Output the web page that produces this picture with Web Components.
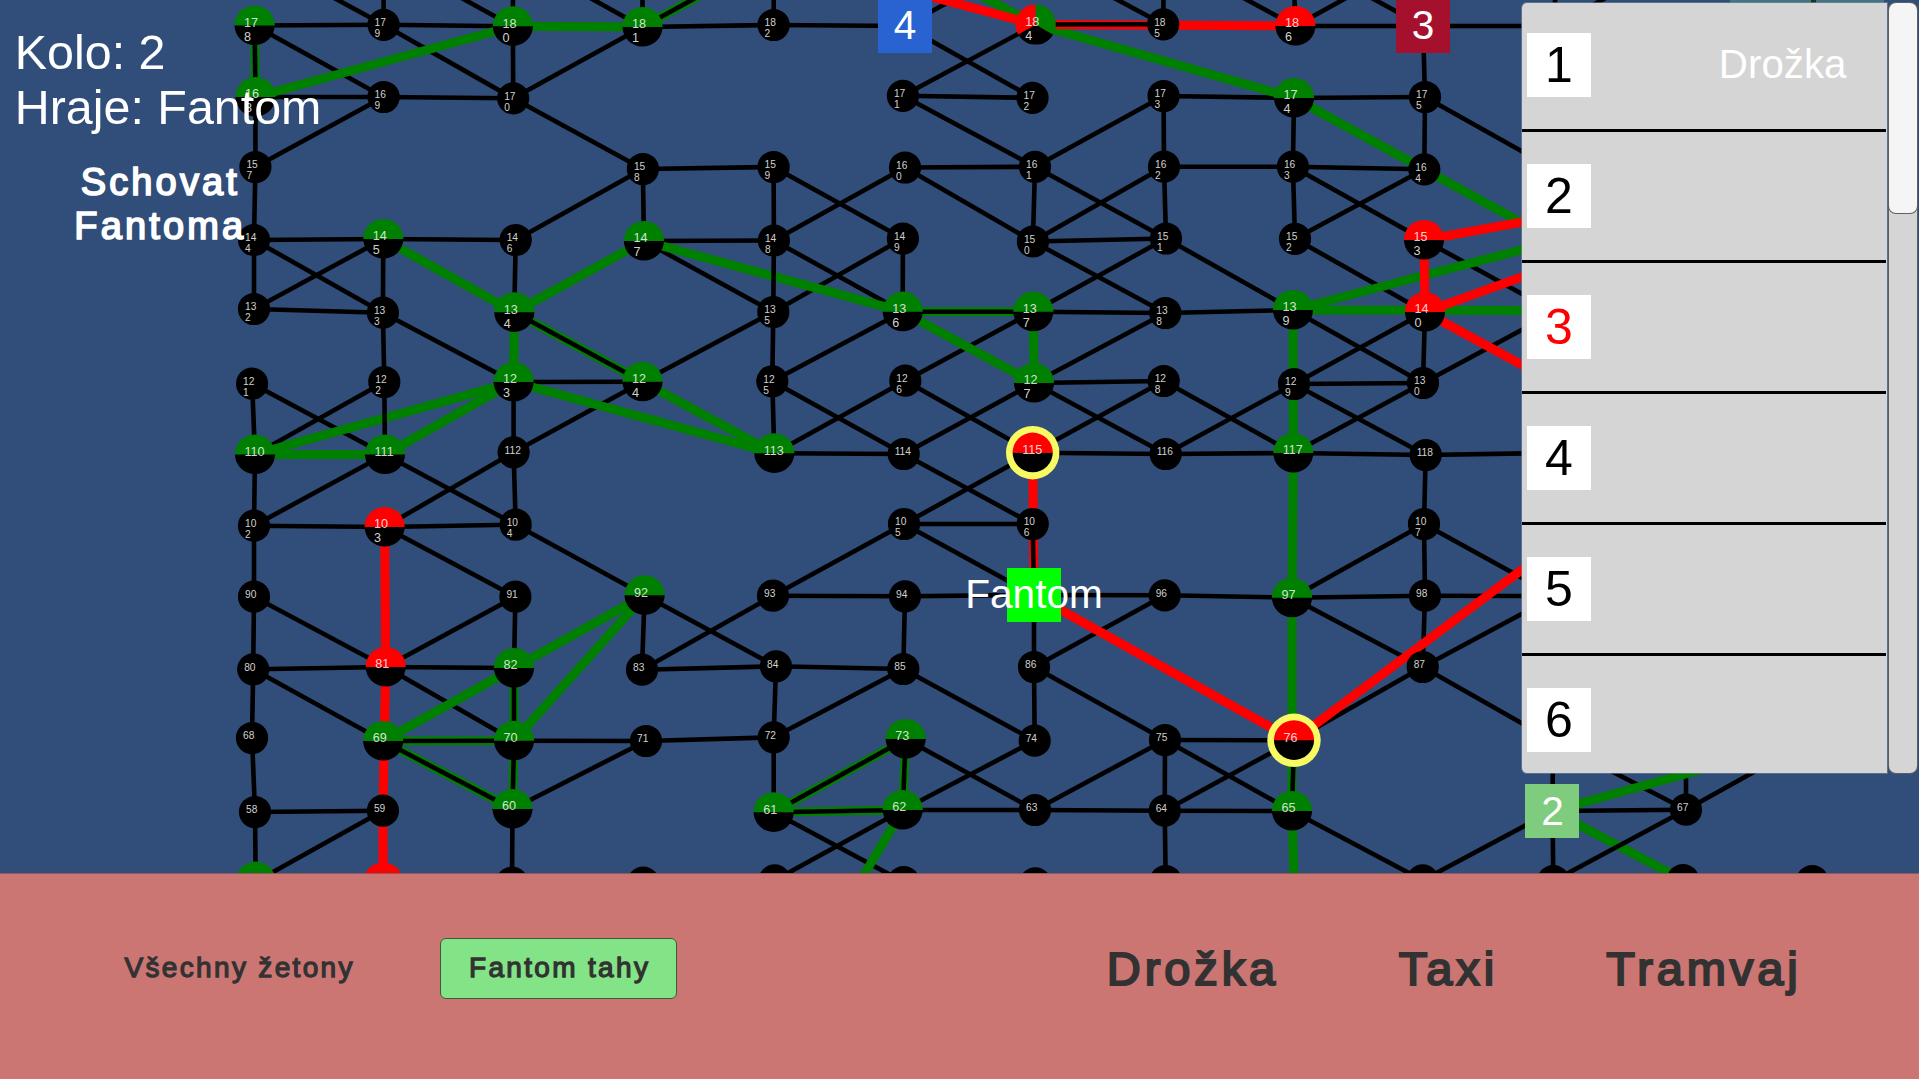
<!DOCTYPE html>
<html lang="cs">
<head>
<meta charset="utf-8">
<title>Fantom</title>
<style>
html,body{margin:0;padding:0;height:100%;overflow:hidden;background:#314d79;font-family:"Liberation Sans",Arial,sans-serif}
</style>
</head>
<body>
<game-screen></game-screen>
<script>
// id: [x, y, colours of the transport types, ring]
const NODES = {
178:[254.6,25.5,'g'],179:[383.6,24.8],180:[512.9,26.3,'g'],181:[642.5,27,'g'],182:[773.6,25],184:[1035.7,24.5,'gr'],185:[1163.2,24.3],186:[1295.4,26,'r'],
168:[255.5,97,'g'],169:[383.6,97],170:[513.2,98.3],171:[902.9,95.8],172:[1032.5,97.8],173:[1163.6,96],174:[1294,98,'g'],175:[1425,97],
157:[255.4,167],158:[642.9,169],159:[773.6,167],160:[905,167.5],161:[1035,166.8],162:[1164,166.7],163:[1292.9,166.7],164:[1424.3,169.3],
144:[254,240],145:[383.3,239,'g'],146:[515.7,240],147:[643.9,241,'g'],148:[773.9,240.5],149:[902.9,238.5],150:[1032.9,241.5],151:[1166,238.5],152:[1295,238.8],153:[1424,240,'r'],
132:[254,309],133:[382.9,312.7],134:[514.3,312.3,'g'],135:[773.3,312],136:[902.7,311.7,'g'],137:[1033.3,311.7,'g'],138:[1165.3,313],139:[1293,310,'g'],140:[1425,312,'r'],
121:[252.1,383.7],122:[384.3,382],123:[513.6,382,'g'],124:[642.5,381.7,'g'],125:[772.3,381.3],126:[905.3,380.7],127:[1034,383,'g'],128:[1163.7,381],129:[1294,384],130:[1423,383],
110:[255,454.5,'g'],111:[385,454.5,'g'],112:[513.6,452.3],113:[774.3,453.3,'g'],114:[903.7,454],115:[1032.7,452.7,'r',1],116:[1165.7,454],117:[1293.3,453,'g'],118:[1425.7,455],
102:[254,525.7],103:[384.6,527,'r'],104:[515.7,524.7],105:[904,524],106:[1032.7,524],107:[1424,524],
90:[254,596.7],91:[515.4,596.7],92:[644.6,595.3,'g'],93:[773,595.7],94:[905,596.3],96:[1164.7,595.3],97:[1292,597.7,'g'],98:[1425,595.7],
80:[253.2,669.3],81:[385.7,667,'r'],82:[514,668,'g'],83:[642,669.7],84:[776,666.3],85:[903.3,669],86:[1034,667],87:[1422.7,667],
68:[252,738],69:[383.2,741,'g'],70:[514,740.7,'g'],71:[646,741],72:[773.7,737.3],73:[905.7,739,'g'],74:[1034.7,740.7],75:[1165,740],76:[1294,740.3,'r',1],
58:[255,812],59:[382.9,810.7],60:[512.5,809,'g'],61:[773.7,812.3,'g'],62:[902.7,810,'g'],63:[1035,810],64:[1164.7,810.7],65:[1292,811,'g'],67:[1686,809.7],
// row cut by the action bar, drawn without labels
b1:[255.7,881.7,'g'],b2:[383.2,882.5,'r'],b3:[512,882.7],b4:[643.2,882.7],b5:[774.7,880.3],b6:[903.7,882],b7:[1035.3,883.3],b8:[1165.7,881],b9:[1422.7,880.3],c1:[1553.3,881],c2:[1683,880],c3:[1812.3,881]
};
// points outside the view or covered by pawns
const HIDDEN = {p4:[905,26],p3:[1423,26],pf:[1034,595],p2:[1552.5,811],
t1:[255,-45],t2:[383.6,-45],t3:[513,-45],t4:[642.5,-45],t5:[774,-45],t6:[903,-45],t7:[1034,-45],t8:[1164,-45],t9:[1293,-45],t10:[1424,-45],
r0:[1555,26],r1:[1555,170],r2:[1555,312],r3:[1553,453],r4:[1555,596],r5:[1553,741],r6:[1686,741],r7:[1815,738],r8:[1555,-45],r9:[1683,-45]};
const BLACK = `178-169 178-179 179-t2 179-t1 179-180 179-170 180-t3 180-t2 180-170 168-169 169-170 169-157 168-157 157-144 144-145 145-146 144-133 145-132 144-132 145-133 146-134 146-158 158-147 158-159 158-170 170-181 181-t4 181-t3 181-182 182-t5 182-p4 p4-t7 p4-172 184-171 171-172 171-161 160-161 160-150 160-148 159-148 159-149 148-147 148-136 147-135 149-135 149-136 161-150 161-151 161-173 173-162 173-174 174-163 174-175 175-p3 175-164 175-r1 162-150 162-151 162-163 163-164 163-152 163-153 164-152 150-151 150-138 151-137 151-139 152-140 153-r2 185-t8 185-t7 186-t9 186-t8 186-t10 186-p3 p3-t9 p3-r0 r0-r8 r0-r9
132-133 133-122 133-123 124-123 124-135 124-112 110-121 110-122 121-111 110-102 111-102 111-104 123-112 112-103 112-104 102-103 103-104 102-90 103-91 104-92 135-125 125-136 125-114 125-113 113-126 113-114 126-137 126-115 137-138 127-138 127-128 127-114 127-116 115-128 115-116 114-106 115-105 105-106 105-93 105-pf 138-139 139-130 140-129 140-130 130-r2 130-117 129-130 129-118 129-116 128-117 116-117 117-118 118-r3 118-107 107-97 107-98 107-r4
97-96 97-98 97-87 98-r4 98-87 87-76 87-r4 87-r5 65-b9 b9-p2 65-75 65-64 64-63 64-75 64-76 64-b8 75-86 75-63 75-76 96-86 96-pf 94-pf 86-pf 86-74 85-74 85-94 85-84 85-72 84-72 84-83 84-92 93-83 93-94 92-83 70-71 71-60 71-72 72-61 73-63 74-62 62-63 61-b6 62-b5 60-b3 58-b1 59-b1 58-59 68-58 68-80 80-69 80-81 80-90 90-81 91-81 91-82 81-82 81-70 67-p2 67-r6 67-r5 67-r7 p2-r5 p2-c1`;
const GREEN = `178-168 168-180 180-181 181-t5 184-t6 184-174 174-r8g 134-145 134-147 134-123 134-124 124-113 123-113 123-110 123-111 110-111 136-147 136-137 136-127 137-127 139-117 139-rg1 139-rg2 117-97 97-65 65-dg1 92-82 92-70 82-69 82-70 69-70 69-60 70-60 61-73 73-62 61-62 62-dg2 p2-r7 p2-c2`;
const RED = `184-t5 184-186 153-rr1 140-rr2 140-rr3 153-140 103-81 81-59 59-b2 115-pf pf-76 76-rr4`;
const OVER = `178-168 181-t5 184-185 134-124 122-111 148-135 136-137 106-pf 76-65 82-70 69-70 69-60 70-60 61-73 73-62 61-62 67-c1`;
Object.assign(HIDDEN,{r8g:[1555,241],rg1:[1555,310.5],rg2:[1555,241],dg1:[1294.3,890],dg2:[856,888],rr1:[1555,216],rr2:[1555,265],rr3:[1555,383],rr4:[1535,560]});

const pt = id => NODES[id] || HIDDEN[id];
const edges = (list, color, w) => list.trim().split(/\s+/).map(e => {
  const [a, b] = e.split('-').map(pt);
  return `<line x1="${a[0]}" y1="${a[1]}" x2="${b[0]}" y2="${b[1]}" stroke="${color}" stroke-width="${w}"/>`;
}).join('');

function nodeMarkup(id, [x, y, c, ring]) {
  const r = c ? 20.1 : 16.1;
  const dx = r * .866, dy = r * .5;
  let s = '';
  if (ring) s += `<circle cx="${x}" cy="${y}" r="26.7" fill="#f8fa62"/>`;
  if (c === 'gr') {
    s += `<path d="M${x} ${y}L${x - dx} ${y + dy}A${r} ${r} 0 0 0 ${x + dx} ${y + dy}Z"/>`;
    s += `<path fill="#f00" d="M${x} ${y}V${y - r}A${r} ${r} 0 0 0 ${x - dx} ${y + dy}Z"/>`;
    s += `<path fill="#008000" d="M${x} ${y}V${y - r}A${r} ${r} 0 0 1 ${x + dx} ${y + dy}Z"/>`;
  } else if (c) {
    s += `<path d="M${x - r} ${y - .5}A${r} ${r} 0 0 0 ${x + r} ${y - .5}Z"/>`;
    s += `<path fill="${c === 'g' ? '#008000' : '#f00'}" d="M${x - r} ${y}A${r} ${r} 0 0 1 ${x + r} ${y}Z"/>`;
  } else {
    s += `<circle cx="${x}" cy="${y}" r="${r}"/>`;
  }
  if (/^\d+$/.test(id)) {
    const big = !!c, tx = x - (big ? 10.5 : 9), fs = big ? 12.6 : 10.2;
    const parts = id.length === 3 && !id.startsWith('11') ? [id.slice(0, 2), id[2]] : [id];
    parts.forEach((p, i) => s += `<text x="${tx}" y="${y + 1.2 + i * (big ? 14.2 : 11.1)}" font-size="${fs}">${p}</text>`);
  }
  return s;
}

function define(name, html, setup) {
  const t = document.createElement('template');
  t.innerHTML = html;
  customElements.define(name, class extends HTMLElement {
    constructor() {
      super();
      this.attachShadow({mode: 'open'}).append(t.content.cloneNode(true));
      if (setup) setup(this.shadowRoot, this);
    }
  });
}

define('city-map', `<style>
:host{display:block;overflow:hidden}
svg{display:block}
text{fill:rgba(255,255,255,.83)}
.pawn{fill:#fff;font-size:40.6px;text-anchor:middle}
</style><svg width="1919" height="873" viewBox="0 0 1919 873"></svg>`, root => {
  root.querySelector('svg').innerHTML =
    edges(BLACK, '#000', 4.6) + edges(GREEN, '#008000', 9) + edges(RED, '#f00', 9) + edges(OVER, '#000', 4.6) +
    `<rect x="1730" y="0" width="154" height="3" fill="#457582"/><rect x="1811" y="0" width="5" height="3" fill="#1c3324"/>` +
    Object.entries(NODES).map(([id, n]) => nodeMarkup(id, n)).join('') +
    `<rect x="878" y="-1" width="54" height="54" fill="#2863d1"/><text class="pawn" x="905" y="39.3">4</text>` +
    `<rect x="1396" y="-1" width="54" height="54" fill="#a5112d"/><text class="pawn" x="1423" y="39.3">3</text>` +
    `<rect x="1525" y="784" width="54" height="54" fill="#80cc7f"/><text class="pawn" x="1552.5" y="825">2</text>` +
    `<rect x="1007" y="568" width="54" height="54" fill="#0f0"/><text class="pawn" x="1034" y="608.3">Fantom</text>`;
});

define('game-status', `<style>
:host{display:flex;flex-direction:column;color:#fff;font-size:48.4px;line-height:55px;white-space:nowrap}
</style><slot></slot>`);

define('game-button', `<style>
:host{display:flex;align-items:center;justify-content:center;box-sizing:border-box;color:#323232;text-align:center;white-space:nowrap;
letter-spacing:.083em;padding-left:.083em;-webkit-text-stroke:.045em currentColor;border:1px solid transparent;border-radius:6px}
:host([active]){background:#82e486;border-color:#3d5a3d}
</style><span><slot></slot></span>`);

define('turn-row', `<style>
:host{display:flex;align-items:center;height:128px;padding-left:5px;margin-right:1px;border-bottom:3px solid #000}
b{font-weight:400;width:64px;height:64px;background:#fff;color:var(--number,#000);font-size:50px;line-height:65px;text-align:center}
span{margin-left:auto;padding-right:39.5px;color:#fff;font-size:40.3px}
</style><b></b><span><slot></slot></span>`, (root, el) => {
  root.querySelector('b').textContent = el.getAttribute('turn');
});

define('turn-list', `<style>
:host{display:flex;gap:2px;height:770px}
.rows{width:365px;box-sizing:border-box;background:#d5d5d5;border-radius:5px 0 0 5px;overflow:hidden;box-shadow:0 0 0 1px rgba(120,135,160,.6)}
.rows div{margin-top:-2px}
.bar{width:28px;box-sizing:border-box;background:#d5d5d5;border-radius:7px;box-shadow:0 0 0 1px #5a5f66}
.thumb{height:210px;background:#f5f5f5;border-radius:7px;box-shadow:0 0 0 1px #5f5f5f}
</style><div class="rows"><div><slot></slot></div></div><div class="bar"><div class="thumb"></div></div>`);

define('action-bar', `<style>
:host{display:flex;align-items:center;box-sizing:border-box;background:#cc7674;border-top:1px solid #8d5a62;padding:0 92px 17px 120px}
.left,.right{display:flex;align-items:center}
.left{gap:83px}
.right{gap:5.5px;margin-left:auto}
</style><div class="left"><slot name="left"></slot></div><div class="right"><slot></slot></div>`);

define('game-screen', `<style>
:host{display:grid;grid-template-rows:873px 1fr;width:1919px;height:1079px;position:relative;overflow:hidden}
.hud{position:absolute;left:14.8px;top:25px;display:flex;flex-direction:column;align-items:flex-start}
.hide{color:#fff;font-size:38px;line-height:44px;margin:24px 0 0 49px;width:190px}
.turns{position:absolute;left:1522px;top:3px}
.filter{width:237px;height:61px;font-size:28px}
.move{width:250px;height:80px;font-size:47px}
</style>
<city-map></city-map>
<action-bar>
<game-button slot="left" class="filter">Všechny žetony</game-button>
<game-button slot="left" class="filter" active>Fantom tahy</game-button>
<game-button class="move">Drožka</game-button>
<game-button class="move">Taxi</game-button>
<game-button class="move">Tramvaj</game-button>
</action-bar>
<div class="hud">
<game-status><div>Kolo: 2</div><div>Hraje: Fantom</div></game-status>
<game-button class="hide">Schovat<br>Fantoma</game-button>
</div>
<turn-list class="turns">
<turn-row turn="1">Drožka</turn-row>
<turn-row turn="2"></turn-row>
<turn-row turn="3" style="--number:#f00"></turn-row>
<turn-row turn="4"></turn-row>
<turn-row turn="5"></turn-row>
<turn-row turn="6"></turn-row>
</turn-list>`);
</script>
</body>
</html>
